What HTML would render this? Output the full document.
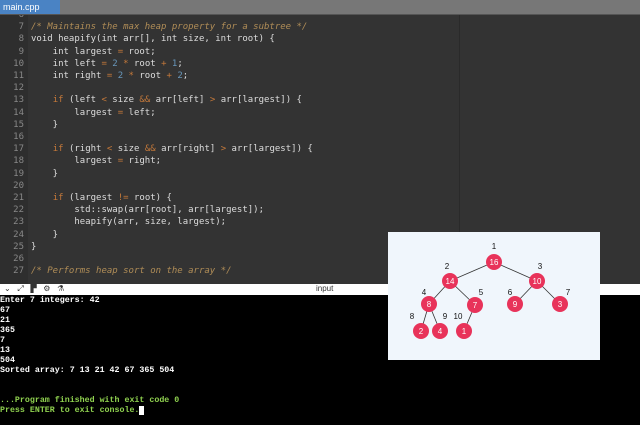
<html><head><style>
body{margin:0;width:640px;height:425px;overflow:hidden;background:#000;position:relative;font-family:"Liberation Sans",sans-serif}
#tab{position:absolute;left:0;top:0;width:640px;height:14px;background:#777;border-bottom:1px solid #555}
#tab span{position:absolute;left:0;top:0;width:60px;height:14px;background:#4a83c4;color:#fff;font-size:9px;line-height:14px;padding-left:3px;box-sizing:border-box}
#ed{position:absolute;left:0;top:15px;width:640px;height:269px;background:#333;overflow:hidden}
#gut{position:absolute;left:0;top:0;width:28px;height:269px;background:#2e2e2e}
#margin{position:absolute;left:459px;top:0;width:1px;height:269px;background:#2a2a2a}
pre{margin:0;font-family:"DejaVu Sans Mono","Liberation Mono",monospace;}
#code{position:absolute;left:0;top:-6px;font-size:9px;line-height:12.2px;color:#ddd}
.n{display:inline-block;width:24px;text-align:right;color:#888;margin-right:7px}
.c{color:#b08d57;font-style:italic}.k{color:#c5793a}.d{color:#6897bb}.o{color:#c5793a}
#tb{position:absolute;left:0;top:284px;width:640px;height:11px;background:#fff;font-size:8px;color:#333}
#con{position:absolute;left:0;top:296px;font-size:8.3px;line-height:10px;color:#fff;font-family:"Liberation Mono",monospace;font-weight:bold}
.g{color:#8fd14f}
#img{position:absolute;left:388px;top:232px;width:212px;height:128px;background:#f0f6fc}
</style></head><body>
<div id="tab"><span>main.cpp</span></div>
<div id="ed"><div id="gut"></div><div id="margin"></div>
<pre id="code"><span class="n">6</span>
<span class="n">7</span><span class="c">/* Maintains the max heap property for a subtree */</span>
<span class="n">8</span>void heapify(int arr[], int size, int root) {
<span class="n">9</span>    int largest <span class="o">=</span> root;
<span class="n">10</span>    int left <span class="o">=</span> <span class="d">2</span> <span class="o">*</span> root <span class="o">+</span> <span class="d">1</span>;
<span class="n">11</span>    int right <span class="o">=</span> <span class="d">2</span> <span class="o">*</span> root <span class="o">+</span> <span class="d">2</span>;
<span class="n">12</span>
<span class="n">13</span>    <span class="k">if</span> (left <span class="o">&lt;</span> size <span class="o">&amp;&amp;</span> arr[left] <span class="o">&gt;</span> arr[largest]) {
<span class="n">14</span>        largest <span class="o">=</span> left;
<span class="n">15</span>    }
<span class="n">16</span>
<span class="n">17</span>    <span class="k">if</span> (right <span class="o">&lt;</span> size <span class="o">&amp;&amp;</span> arr[right] <span class="o">&gt;</span> arr[largest]) {
<span class="n">18</span>        largest <span class="o">=</span> right;
<span class="n">19</span>    }
<span class="n">20</span>
<span class="n">21</span>    <span class="k">if</span> (largest <span class="o">!=</span> root) {
<span class="n">22</span>        std::swap(arr[root], arr[largest]);
<span class="n">23</span>        heapify(arr, size, largest);
<span class="n">24</span>    }
<span class="n">25</span>}
<span class="n">26</span>
<span class="n">27</span><span class="c">/* Performs heap sort on the array */</span></pre></div>
<div id="tb"><span style="position:absolute;left:4px;top:0">⌄ &nbsp; ⤢ &nbsp; ▛ &nbsp; ⚙ &nbsp; ⚗</span><span style="position:absolute;left:316px;top:0">input</span></div>
<pre id="con">Enter 7 integers: 42
67
21
365
7
13
504
Sorted array: 7 13 21 42 67 365 504


<span class="g">...Program finished with exit code 0
Press ENTER to exit console.</span><span style="background:#fff">&nbsp;</span></pre>
<svg id="img" viewBox="388 232 212 128" width="212" height="128">
<g stroke="#333" stroke-width="0.8">
<line x1="494" y1="262" x2="450" y2="281"/><line x1="494" y1="262" x2="537" y2="281"/>
<line x1="450" y1="281" x2="429" y2="304"/><line x1="450" y1="281" x2="475" y2="305"/>
<line x1="537" y1="281" x2="515" y2="304"/><line x1="537" y1="281" x2="560" y2="304"/>
<line x1="429" y1="304" x2="421" y2="331"/><line x1="429" y1="304" x2="440" y2="331"/>
<line x1="475" y1="305" x2="464" y2="331"/></g>
<g fill="#e8335a">
<circle cx="494" cy="262" r="8"/><circle cx="450" cy="281" r="8"/><circle cx="537" cy="281" r="8"/>
<circle cx="429" cy="304" r="8"/><circle cx="475" cy="305" r="8"/><circle cx="515" cy="304" r="8"/><circle cx="560" cy="304" r="8"/>
<circle cx="421" cy="331" r="8"/><circle cx="440" cy="331" r="8"/><circle cx="464" cy="331" r="8"/></g>
<g fill="#fff" font-size="8" text-anchor="middle" font-family="Liberation Sans">
<text x="494" y="265">16</text><text x="450" y="284">14</text><text x="537" y="284">10</text>
<text x="429" y="307">8</text><text x="475" y="308">7</text><text x="515" y="307">9</text><text x="560" y="307">3</text>
<text x="421" y="334">2</text><text x="440" y="334">4</text><text x="464" y="334">1</text></g>
<g fill="#111" font-size="8" text-anchor="middle" font-family="Liberation Sans">
<text x="494" y="249">1</text><text x="447" y="269">2</text><text x="540" y="269">3</text>
<text x="424" y="295">4</text><text x="481" y="295">5</text><text x="510" y="295">6</text><text x="568" y="295">7</text>
<text x="412" y="319">8</text><text x="445" y="319">9</text><text x="458" y="319">10</text></g>
</svg>
</body></html>
